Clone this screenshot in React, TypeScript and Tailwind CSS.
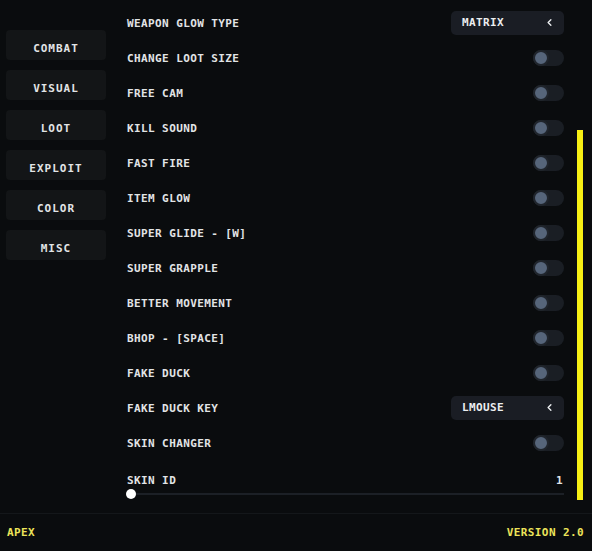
import React from 'react';
import { ChevronLeft } from 'lucide-react';

type Row =
  | { label: string; kind: 'toggle' }
  | { label: string; kind: 'select'; value: string };

const tabs = ['COMBAT', 'VISUAL', 'LOOT', 'EXPLOIT', 'COLOR', 'MISC'];

const rows: Row[] = [
  { label: 'WEAPON GLOW TYPE', kind: 'select', value: 'MATRIX' },
  { label: 'CHANGE LOOT SIZE', kind: 'toggle' },
  { label: 'FREE CAM', kind: 'toggle' },
  { label: 'KILL SOUND', kind: 'toggle' },
  { label: 'FAST FIRE', kind: 'toggle' },
  { label: 'ITEM GLOW', kind: 'toggle' },
  { label: 'SUPER GLIDE - [W]', kind: 'toggle' },
  { label: 'SUPER GRAPPLE', kind: 'toggle' },
  { label: 'BETTER MOVEMENT', kind: 'toggle' },
  { label: 'BHOP - [SPACE]', kind: 'toggle' },
  { label: 'FAKE DUCK', kind: 'toggle' },
  { label: 'FAKE DUCK KEY', kind: 'select', value: 'LMOUSE' },
  { label: 'SKIN CHANGER', kind: 'toggle' },
];

const font = "font-['DejaVu_Sans_Mono',monospace] font-bold text-[11px] tracking-[0.4px]";

const Toggle = () => (
  <div className="w-[31px] h-[16px] rounded-full bg-[#1a1e24] flex items-center">
    <div className="w-[16px] h-[16px] rounded-full bg-[#56657a] border-[2px] border-[#20252c]" />
  </div>
);

const Select = ({ value }: { value: string }) => (
  <div className="w-[113px] h-[24px] rounded-[5px] bg-[#1a1d24] flex items-center justify-between pl-[11px] pr-[9px] text-[#eceef0]">
    <span className="pt-[1px]">{value}</span>
    <ChevronLeft size={11} strokeWidth={3} />
  </div>
);

export default function App() {
  return (
    <div className={`w-[592px] h-[551px] bg-[#0a0c0e] flex flex-col text-[#e2e4e6] ${font}`}>
      <div className="flex flex-1">
        <div className="w-[100px] ml-[6px] pt-[30px] flex flex-col gap-[10px]">
          {tabs.map(t => (
            <div key={t} className="h-[30px] rounded-[4px] bg-[#131517] flex items-center justify-center pt-[8px] tracking-[1px]">
              {t}
            </div>
          ))}
        </div>

        <div className="w-[437px] ml-[21px] pt-[5px] flex flex-col">
          {rows.map(r => (
            <div key={r.label} className="h-[35px] flex items-center justify-between">
              <span className="pt-[3px]">{r.label}</span>
              {r.kind === 'toggle' ? <Toggle /> : <Select value={r.value} />}
            </div>
          ))}

          <div className="mt-[13px] flex items-center justify-between pr-[1px]">
            <span>SKIN ID</span>
            <span>1</span>
          </div>
          <div className="relative mt-[-1px] ml-[4px] h-[10px] flex items-center">
            <div className="h-[2px] w-full bg-[#1c2026]" />
            <div className="absolute left-[-5px] top-0 w-[10px] h-[10px] rounded-full bg-white" />
          </div>
        </div>

        <div className="ml-[13px] pt-[130px]">
          <div className="w-[6px] h-[370px] bg-[#f7ef14]" />
        </div>
      </div>

      <div className="h-[38px] border-t border-[#14171a] flex items-center justify-between px-[7px] pr-[8px] pt-[2px] text-[#ede45a]">
        <span>APEX</span>
        <span>VERSION 2.0</span>
      </div>
    </div>
  );
}
